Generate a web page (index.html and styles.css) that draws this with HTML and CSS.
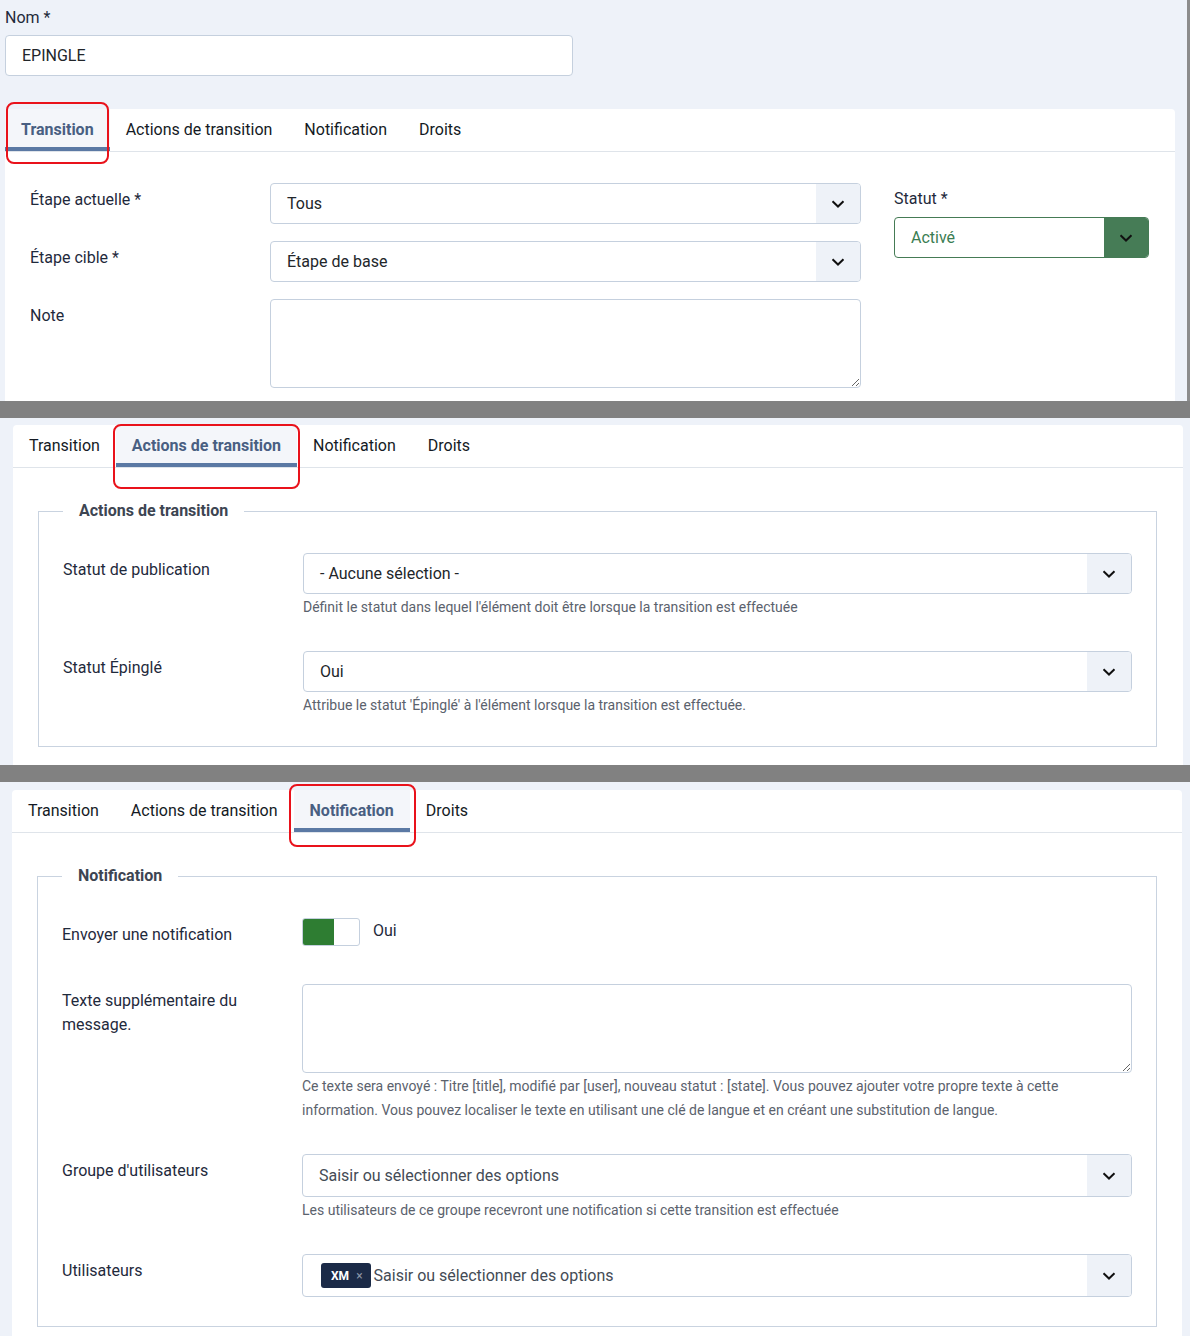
FILE: index.html
```html
<!DOCTYPE html>
<html lang="fr">
<head>
    <meta charset="UTF-8">
    <meta name="viewport" content="width=device-width, initial-scale=1.0">
    <title>Transition - EPINGLE</title>
    <link rel="stylesheet" href="styles.css">
</head>
<body>

<!-- Onglet Transition -->
<section class="shot shot-1">
    <div class="name-field">
        <label for="name">Nom *</label>
        <input id="name" class="text-input" type="text" value="EPINGLE">
    </div>

    <div class="card">
        <ul class="tabs">
            <li class="tab is-active">Transition<span class="mark mark-1"></span></li>
            <li class="tab">Actions de transition</li>
            <li class="tab">Notification</li>
            <li class="tab">Droits</li>
        </ul>

        <div class="transition-body">
            <div class="main-col">
                <div class="row">
                    <label class="control-label">Étape actuelle *</label>
                    <div class="select">
                        <span class="select-value">Tous</span>
                        <span class="select-arrow"><svg width="14" height="8" viewBox="0 0 14 8"><path d="M1.5 1.2l5.5 5.3 5.5-5.3" fill="none" stroke="#111" stroke-width="2"/></svg></span>
                    </div>
                </div>
                <div class="row">
                    <label class="control-label">Étape cible *</label>
                    <div class="select">
                        <span class="select-value">Étape de base</span>
                        <span class="select-arrow"><svg width="14" height="8" viewBox="0 0 14 8"><path d="M1.5 1.2l5.5 5.3 5.5-5.3" fill="none" stroke="#111" stroke-width="2"/></svg></span>
                    </div>
                </div>
                <div class="row">
                    <label class="control-label">Note</label>
                    <textarea class="textarea"></textarea>
                </div>
            </div>

            <div class="side-col">
                <label class="side-label">Statut *</label>
                <div class="select select-state">
                    <span class="select-value">Activé</span>
                    <span class="select-arrow"><svg width="14" height="8" viewBox="0 0 14 8"><path d="M1.5 1.2l5.5 5.3 5.5-5.3" fill="none" stroke="#111" stroke-width="2"/></svg></span>
                </div>
            </div>
        </div>
    </div>
</section>

<div class="divider"></div>

<!-- Onglet Actions de transition -->
<section class="shot shot-2">
    <div class="card">
        <ul class="tabs">
            <li class="tab">Transition</li>
            <li class="tab is-active">Actions de transition<span class="mark mark-2"></span></li>
            <li class="tab">Notification</li>
            <li class="tab">Droits</li>
        </ul>

        <fieldset class="options">
            <legend>Actions de transition</legend>

            <div class="row">
                <label class="control-label">Statut de publication</label>
                <div>
                    <div class="select">
                        <span class="select-value">- Aucune sélection -</span>
                        <span class="select-arrow"><svg width="14" height="8" viewBox="0 0 14 8"><path d="M1.5 1.2l5.5 5.3 5.5-5.3" fill="none" stroke="#111" stroke-width="2"/></svg></span>
                    </div>
                    <p class="help">Définit le statut dans lequel l'élément doit être lorsque la transition est effectuée</p>
                </div>
            </div>

            <div class="row">
                <label class="control-label">Statut Épinglé</label>
                <div>
                    <div class="select">
                        <span class="select-value">Oui</span>
                        <span class="select-arrow"><svg width="14" height="8" viewBox="0 0 14 8"><path d="M1.5 1.2l5.5 5.3 5.5-5.3" fill="none" stroke="#111" stroke-width="2"/></svg></span>
                    </div>
                    <p class="help">Attribue le statut 'Épinglé' à l'élément lorsque la transition est effectuée.</p>
                </div>
            </div>
        </fieldset>
    </div>
</section>

<div class="divider"></div>

<!-- Onglet Notification -->
<section class="shot shot-3">
    <div class="card">
        <ul class="tabs">
            <li class="tab">Transition</li>
            <li class="tab">Actions de transition</li>
            <li class="tab is-active">Notification<span class="mark mark-3"></span></li>
            <li class="tab">Droits</li>
        </ul>

        <fieldset class="options">
            <legend>Notification</legend>

            <div class="row row-switch">
                <label class="control-label">Envoyer une notification</label>
                <div class="switch-wrap">
                    <span class="switch"><span class="switch-on"></span></span>
                    <span class="switch-label">Oui</span>
                </div>
            </div>

            <div class="row">
                <label class="control-label label-narrow">Texte supplémentaire du message.</label>
                <div>
                    <textarea class="textarea"></textarea>
                    <p class="help">Ce texte sera envoyé : Titre [title], modifié par [user], nouveau statut : [state]. Vous pouvez ajouter votre propre texte à cette information. Vous pouvez localiser le texte en utilisant une clé de langue et en créant une substitution de langue.</p>
                </div>
            </div>

            <div class="row">
                <label class="control-label">Groupe d'utilisateurs</label>
                <div>
                    <div class="select select-choices">
                        <span class="select-value placeholder">Saisir ou sélectionner des options</span>
                        <span class="select-arrow"><svg width="14" height="8" viewBox="0 0 14 8"><path d="M1.5 1.2l5.5 5.3 5.5-5.3" fill="none" stroke="#111" stroke-width="2"/></svg></span>
                    </div>
                    <p class="help">Les utilisateurs de ce groupe recevront une notification si cette transition est effectuée</p>
                </div>
            </div>

            <div class="row">
                <label class="control-label">Utilisateurs</label>
                <div>
                    <div class="select select-choices">
                        <span class="select-value placeholder with-chip"><span class="chip">XM <span class="chip-x">×</span></span>Saisir ou sélectionner des options</span>
                        <span class="select-arrow"><svg width="14" height="8" viewBox="0 0 14 8"><path d="M1.5 1.2l5.5 5.3 5.5-5.3" fill="none" stroke="#111" stroke-width="2"/></svg></span>
                    </div>
                </div>
            </div>
        </fieldset>
    </div>
</section>

</body>
</html>
```

FILE: styles.css
```css
/* Base */
body {
    margin: 0;
    font-family: Roboto, "Noto Sans", Arial, sans-serif;
    font-size: 16px;
    line-height: 24px;
    color: #1f2a3c;
    background-color: #eef2f9;
}

.shot {
    box-sizing: border-box;
    width: 1190px;
    overflow: hidden;
    background-color: #eef2f9;
}

.shot-1 {
    height: 401px;
    padding: 6px 0 0 5px;
    border-right: 3px solid #8c8c8c;
}

.shot-2 {
    height: 347px;
    padding: 7px 0 0 13px;
}

.shot-3 {
    height: 554px;
    padding: 8px 0 0 12px;
}

.divider {
    height: 17px;
    background-color: #818181;
}

/* Nom */
.name-field label {
    display: block;
}

.text-input {
    box-sizing: border-box;
    display: block;
    width: 568px;
    height: 41px;
    margin-top: 5px;
    padding: 0 16px;
    border: 1px solid #c5d0de;
    border-radius: 4px;
    font: inherit;
    color: #22262a;
    background: white;
}

/* Carte avec onglets */
.card {
    width: 1170px;
    background-color: white;
    border-radius: 4px 4px 0 0;
}

.shot-1 .card {
    margin-top: 33px;
    height: 300px;
}

.shot-2 .card,
.shot-3 .card {
    height: 600px;
}

.tabs {
    display: flex;
    margin: 0;
    padding: 0;
    list-style: none;
    border-bottom: 1px solid #dfe4ea;
}

.tab {
    position: relative;
    display: flex;
    align-items: center;
    height: 42px;
    padding: 0 16px;
    color: #141a24;
}

.tab.is-active {
    color: #495f82;
    font-weight: bold;
    background-color: #f4f6fa;
    box-shadow: inset 0 -4px 0 #5b79a4;
}

/* Cadre rouge autour de l'onglet courant */
.mark {
    position: absolute;
    border: 2px solid #e9121b;
    border-radius: 8px;
}

.mark-1 { top: -7px; bottom: -13px; left: 1px; right: 1px; }
.mark-2 { top: -1px; bottom: -22px; left: -3px; right: -3px; }
.mark-3 { top: -6px; bottom: -15px; left: -5px; right: -6px; }

/* Onglet Transition */
.transition-body {
    display: flex;
    gap: 33px;
    padding: 31px 26px 0 25px;
}

.main-col {
    flex: 1;
    display: flex;
    flex-direction: column;
    gap: 17px;
}

.side-col {
    width: 255px;
    padding-top: 4px;
}

.side-label {
    display: block;
    margin-bottom: 6px;
}

.row {
    display: grid;
    grid-template-columns: 240px 1fr;
}

.control-label {
    padding-top: 5px;
}

.label-narrow {
    padding-right: 30px;
}

/* Selects */
.select {
    box-sizing: border-box;
    display: flex;
    height: 41px;
    border: 1px solid #c5d0de;
    border-radius: 4px;
    background: white;
    overflow: hidden;
}

.select-value {
    flex: 1;
    display: flex;
    align-items: center;
    padding-left: 16px;
    color: #22262a;
}

.select-arrow {
    display: flex;
    align-items: center;
    justify-content: center;
    width: 44px;
    background-color: #eef2f8;
}

.select-state {
    border-color: #457b55;
}

.select-state .select-value {
    color: #3a7d52;
}

.select-state .select-arrow {
    background-color: #467c56;
}

.select-choices {
    height: 43px;
}

.placeholder {
    color: #444b55;
}

.with-chip {
    padding-left: 18px;
}

.chip {
    display: inline-flex;
    align-items: center;
    height: 25px;
    margin-right: 3px;
    padding: 0 8px 0 10px;
    border-radius: 3px;
    background-color: #1b2a47;
    color: white;
    font-size: 12px;
    font-weight: bold;
}

.chip-x {
    margin-left: 7px;
    color: #8d98a8;
    font-weight: normal;
}

.textarea {
    box-sizing: border-box;
    display: block;
    width: 100%;
    height: 89px;
    border: 1px solid #c5d0de;
    border-radius: 4px;
    font: inherit;
}

/* Fieldsets */
.options {
    margin: 31px 26px 0 25px;
    padding: 30px 24px 29px 24px;
    border: 1px solid #c9d3e0;
}

.shot-3 .options {
    margin-right: 25px;
}

.options legend {
    padding: 0 16px;
    font-weight: bold;
    color: #3d4552;
}

.options .row + .row {
    margin-top: 32px;
}

.help {
    margin: 1px 0 0;
    font-size: 14px;
    line-height: 24px;
    color: #5b626d;
}

/* Interrupteur Oui / Non */
.row-switch {
    min-height: 34px;
}

.switch-wrap {
    display: flex;
    align-items: flex-start;
    gap: 13px;
}

.switch {
    box-sizing: border-box;
    display: flex;
    width: 58px;
    height: 28px;
    border: 1px solid #c5d0de;
    border-radius: 3px;
    overflow: hidden;
}

.switch-on {
    width: 31px;
    background-color: #2e7d32;
}

.switch-label {
    line-height: 26px;
}
```
